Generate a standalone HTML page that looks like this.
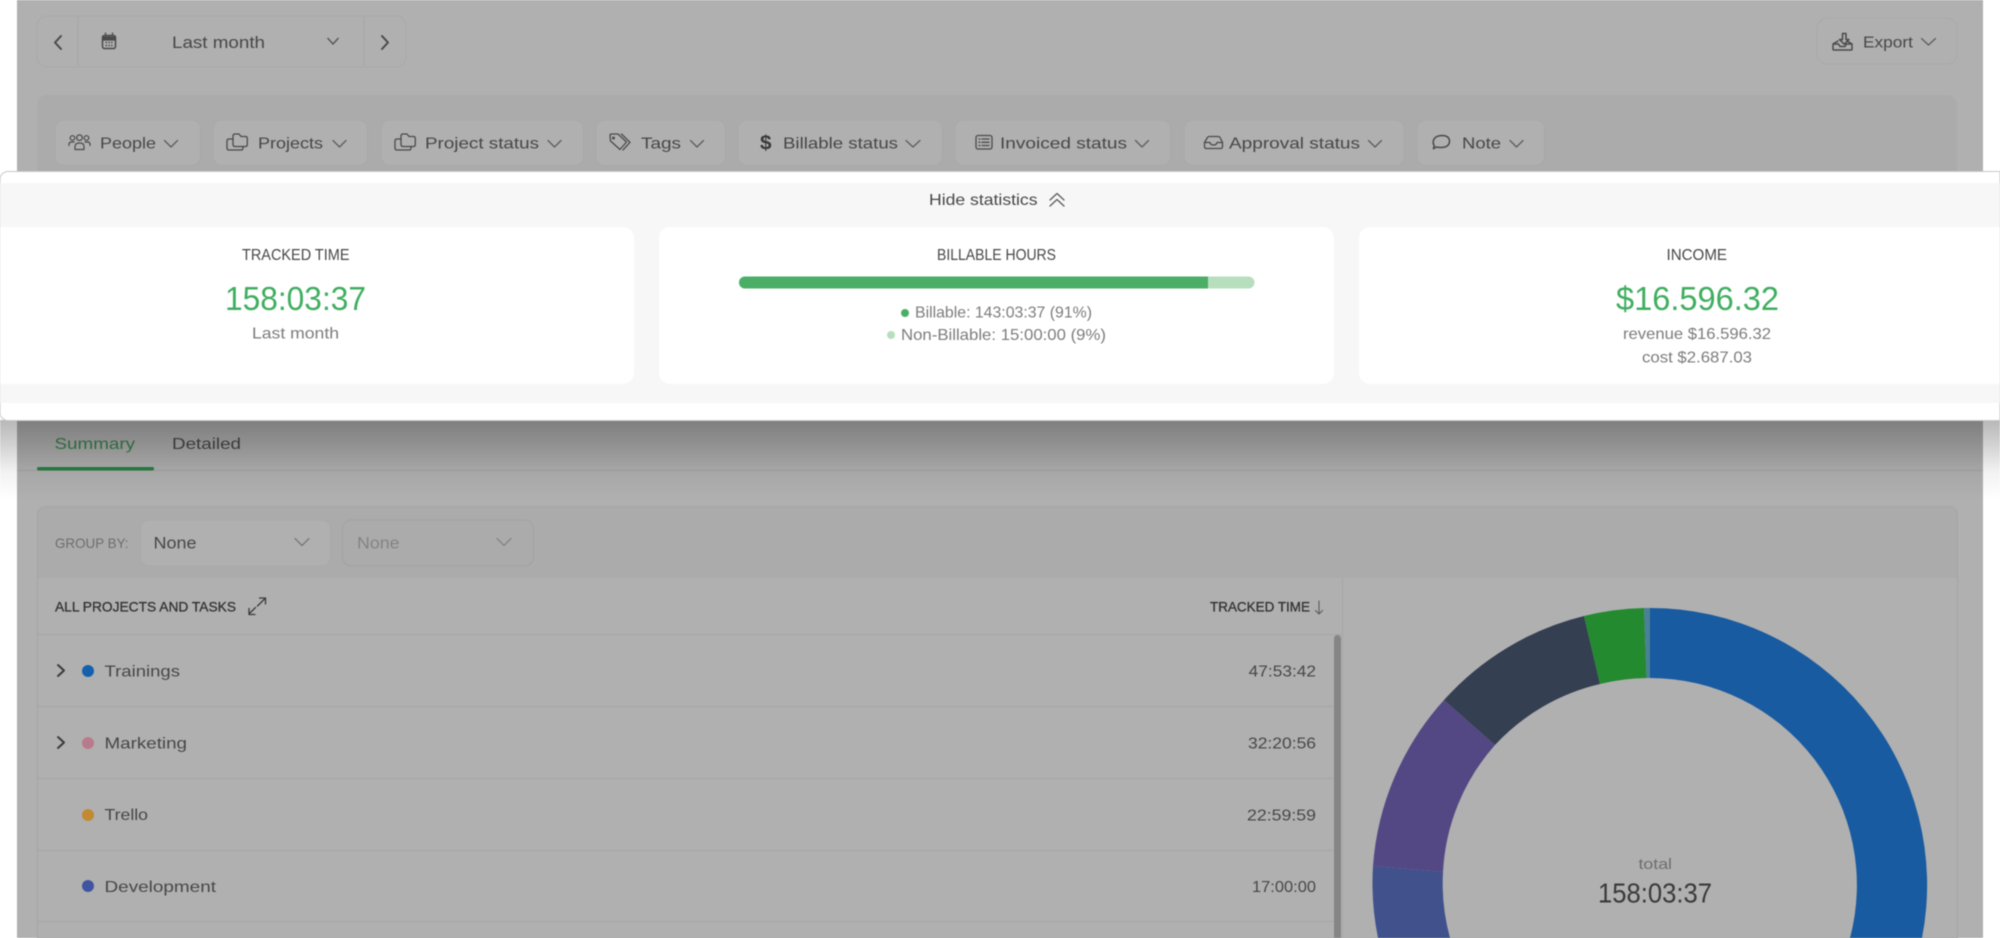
<!DOCTYPE html>
<html lang="en">
<head>
<meta charset="utf-8">
<title>Time report</title>
<style>
html,body{margin:0;padding:0;width:2000px;height:938px;overflow:hidden;background:#fff}
#wrap{position:relative;width:2000px;height:938px;overflow:hidden}
svg{display:block;position:absolute;left:0;top:0;width:2000px;height:938px;overflow:hidden}
#all{filter:blur(.45px)}
text{font-family:"Liberation Sans",sans-serif;fill:#474747;font-size:16px}
.g{fill:#7c7c7c}
.n{fill:#3fae5f}
.ic{fill:none;stroke:#4a4a4a;stroke-width:1.5;stroke-linecap:round;stroke-linejoin:round}
.ch{fill:none;stroke:#5c5c5c;stroke-width:1.25;stroke-linecap:round;stroke-linejoin:round}
.b{fill:#b0b0b0;stroke:#a9a9a9;stroke-width:1}
.s{stroke:#a5a5a5;stroke-width:1;fill:none}
</style>
</head>
<body>
<div id="wrap">
<svg viewBox="0 0 2000 938" xmlns="http://www.w3.org/2000/svg">
<defs>
<linearGradient id="sh" x1="0" y1="0" x2="0" y2="1">
<stop offset="0" stop-color="#000" stop-opacity=".28"/>
<stop offset=".3" stop-color="#000" stop-opacity=".18"/>
<stop offset=".65" stop-color="#000" stop-opacity=".05"/>
<stop offset="1" stop-color="#000" stop-opacity="0"/>
</linearGradient>
<clipPath id="frame"><rect x="0" y="0" width="2000" height="938"/></clipPath>
</defs>
<g clip-path="url(#frame)">
<g id="all">
<rect width="2000" height="938" fill="#fff"/>
<rect x="17" y="0" width="1966" height="938" fill="#b0b0b0"/>

<!-- date control -->
<rect x="37" y="16" width="369" height="51" rx="10" class="b"/>
<path d="M78 17V66M364 17V66" class="s"/>
<path d="M61 36l-6 6.500 6 6.500" class="ic" style="stroke-width:2"/>
<path d="M382 36l6 6.500-6 6.500" class="ic" style="stroke-width:2"/>
<rect x="102.500" y="35.500" width="13" height="13" rx="2" class="ic"/>
<path d="M103 37h12v3h-12zM105.500 32.500v3M112.500 32.500v3" fill="#4a4a4a" stroke="#4a4a4a" stroke-width="1.300"/>
<path d="M105.500 42.500h7M105.500 45.500h7" stroke="#4a4a4a" stroke-width="1.500" stroke-dasharray="1.500 1.300" fill="none"/>
<text x="172" y="48" textLength="93" lengthAdjust="spacingAndGlyphs" style="font-size:17px">Last month</text>
<path d="M328 38.500l5 5.500 5-5.500" class="ch" style="stroke-width:1.600"/>

<!-- export -->
<rect x="1817" y="18" width="140" height="46" rx="10" class="b"/>
<path d="M1838 41l-5 3v5q0 1 1 1h17q1 0 1-1v-5l-5-3M1833 44h5.500l1.500 2.500h5l1.500-2.500h5" class="ic"/>
<path d="M1839.500 39.500h3v-6h3.500v6h3l-4.700 4.700z" class="ic"/>
<text x="1863" y="47.500" textLength="50" lengthAdjust="spacingAndGlyphs">Export</text>
<path d="M1921.500 38.500l7 6.500 7-6.500" class="ch"/>

<!-- filter panel -->
<rect x="37" y="95" width="1920" height="110" rx="10" fill="#ababab"/>
<rect x="55" y="120" width="145.500" height="45.500" rx="9" class="b"/>
<rect x="213" y="120" width="154.500" height="45.500" rx="9" class="b"/>
<rect x="381" y="120" width="202.500" height="45.500" rx="9" class="b"/>
<rect x="596" y="120" width="129.500" height="45.500" rx="9" class="b"/>
<rect x="738" y="120" width="204.500" height="45.500" rx="9" class="b"/>
<rect x="955" y="120" width="215.500" height="45.500" rx="9" class="b"/>
<rect x="1184" y="120" width="220.500" height="45.500" rx="9" class="b"/>
<rect x="1417" y="120" width="127.500" height="45.500" rx="9" class="b"/>

<g class="ic" style="stroke-width:1.200">
<circle cx="72.500" cy="138" r="2.300"/><circle cx="79.500" cy="137.700" r="2.800"/><circle cx="86.500" cy="138" r="2.300"/>
<path d="M75 149.500v-3q0-3.500 4.500-3.500t4.500 3.500v3zM69 145.500q-.5-3 2-3.500h3M90 145.500q.5-3-2-3.500h-3"/>
</g>
<g class="ic" style="stroke-width:1.300">
<path d="M232.500 139h-3.500q-2 0-2 2v7q0 2 2 2h12q2 0 2-2v-1.500"/>
<path d="M233 136q0-2 2-2h4l2 2.500h4.500q1.800 0 1.800 2v6q0 2-2 2H235q-2 0-2-2z"/>
<path d="M400.500 139h-3.500q-2 0-2 2v7q0 2 2 2h12q2 0 2-2v-1.500"/>
<path d="M401 136q0-2 2-2h4l2 2.500h4.500q1.800 0 1.800 2v6q0 2-2 2H403q-2 0-2-2z"/>
<path d="M610 135.500q0-1.500 1.500-1.500h6.500l8.500 8-6.500 7.500-9.500-8.500zM621.500 134l8.500 8.300-7 7.700"/>
<circle cx="613.500" cy="138" r=".8"/>
<rect x="976" y="135.500" width="16" height="13.500" rx="2"/>
<path d="M979 139h1M982 139h7M979 142.300h1M982 142.300h7M979 145.500h1M982 145.500h7"/>
<path d="M1204.500 142.500l3-5q.5-1 1.500-1h9.500q1 0 1.500 1l2.500 5v4q0 2-2 2h-14q-2 0-2-2zM1204.500 142.500h5.500q.5 2.500 3.500 2.500t3.500-2.500h4.500"/>
<path d="M1436 147l-2.500 1.800.7-3.300q-1.200-1.500-1-3.500.5-6 8.500-6.500 7.500 0 7.800 5.500 0 6-7.800 6.500-3 0-5.700-.5z" style="stroke-width:1.500"/>
</g>
<text x="760" y="149.500" textLength="11.500" lengthAdjust="spacingAndGlyphs" style="font-size:20px;font-weight:700;fill:#3a3a3a">$</text>

<text x="100" y="148.500" textLength="56" lengthAdjust="spacingAndGlyphs">People</text>
<text x="258" y="148.500" textLength="65" lengthAdjust="spacingAndGlyphs">Projects</text>
<text x="425" y="148.500" textLength="114" lengthAdjust="spacingAndGlyphs">Project status</text>
<text x="641" y="148.500" textLength="40" lengthAdjust="spacingAndGlyphs">Tags</text>
<text x="783" y="148.500" textLength="115" lengthAdjust="spacingAndGlyphs">Billable status</text>
<text x="1000" y="148.500" textLength="127" lengthAdjust="spacingAndGlyphs">Invoiced status</text>
<text x="1229" y="148.500" textLength="131" lengthAdjust="spacingAndGlyphs">Approval status</text>
<text x="1462" y="148.500" textLength="39" lengthAdjust="spacingAndGlyphs">Note</text>
<path d="M164.500 140.500l6.500 6.500 6.500-6.500M333 140.500l6.500 6.500 6.500-6.500M548 140.500l6.500 6.500 6.500-6.500M690.500 140.500l6.500 6.500 6.500-6.500M906 140.500l7 6.500 7-6.500M1135.500 140.500l6.500 6.500 6.500-6.500M1368.500 140.500l6.500 6.500 6.500-6.500M1510 140.500l6.500 6.500 6.500-6.500" class="ch"/>

<!-- lower report -->
<text x="54.500" y="449" textLength="80.500" lengthAdjust="spacingAndGlyphs" style="fill:#3a7f4c">Summary</text>
<text x="172" y="449" textLength="69" lengthAdjust="spacingAndGlyphs">Detailed</text>
<path d="M17 470.500H1983" stroke="#a2a2a2" stroke-width="1"/>
<rect x="37" y="467" width="117" height="3.500" rx="1.500" fill="#2a7f43"/>

<path d="M37.500 938V516q0-9.500 9.500-9.500H1948q9.500 0 9.500 9.500V938z" fill="#b0b0b0" stroke="#a4a4a4"/>
<path d="M38 578V516q0-9.500 9.500-9.500H1948q9 0 9 9.500V578z" fill="#ababab"/>
<text x="55" y="548" textLength="73.500" lengthAdjust="spacingAndGlyphs" style="font-size:14px;fill:#6e6e6e">GROUP BY:</text>
<rect x="140.500" y="520" width="190" height="46" rx="9" class="b"/>
<rect x="342.500" y="520" width="191" height="46" rx="9" fill="#ababab" stroke="#a2a2a2"/>
<text x="153.500" y="548.500" textLength="43" lengthAdjust="spacingAndGlyphs" style="font-size:17px">None</text>
<text x="357" y="548.500" textLength="42.500" lengthAdjust="spacingAndGlyphs" style="font-size:17px;fill:#848484">None</text>
<path d="M295 538.500l7 7 7-7" class="ch" style="stroke:#6c6c6c;stroke-width:1.100"/>
<path d="M497 538.500l7 7 7-7" class="ch" style="stroke:#7c7c7c;stroke-width:1.100"/>

<text x="55" y="611.700" textLength="181" lengthAdjust="spacingAndGlyphs" style="font-size:14px;fill:#333;stroke:#333;stroke-width:.3">ALL PROJECTS AND TASKS</text>
<path d="M257.500 606l7.500-7.500M259.500 598h6v6M255.500 607.500l-6.500 6.500M249 608.500v6h6" class="ic" style="stroke-width:1.300;stroke:#3a3a3a"/>
<text x="1210" y="611.700" textLength="100" lengthAdjust="spacingAndGlyphs" style="font-size:14px;fill:#333;stroke:#333;stroke-width:.3">TRACKED TIME</text>
<path d="M1319 601v13M1315.500 610.500l3.500 3.500 3.500-3.500" class="ch" style="stroke-width:1.100"/>

<path d="M38 634.500H1342M38 706.500H1334M38 778.500H1334M38 850.500H1334M38 921.500H1334" stroke="#a6a6a6" stroke-width="1.200"/>
<path d="M1342.500 578V938" stroke="#a6a6a6" stroke-width="1"/>
<path d="M1334 938V638.500a3.500 3.500 0 0 1 7 0V938z" fill="#858585"/>

<path d="M58 665l6 5.500-6 5.500" class="ic" style="stroke-width:2;stroke:#3a3a3a"/>
<path d="M58 737l6 5.500-6 5.500" class="ic" style="stroke-width:2;stroke:#3a3a3a"/>
<circle cx="88" cy="671" r="6" fill="#1460ae"/>
<circle cx="88" cy="743" r="6" fill="#b97a8d"/>
<circle cx="88" cy="815" r="6" fill="#c28a33"/>
<circle cx="88" cy="886" r="6" fill="#4055a0"/>
<text x="104.500" y="676.700" textLength="75.500" lengthAdjust="spacingAndGlyphs">Trainings</text>
<text x="104.500" y="748.300" textLength="82.500" lengthAdjust="spacingAndGlyphs">Marketing</text>
<text x="104.500" y="820" textLength="43.500" lengthAdjust="spacingAndGlyphs">Trello</text>
<text x="104.500" y="892" textLength="111.500" lengthAdjust="spacingAndGlyphs">Development</text>
<text x="1248.700" y="676.700" textLength="67.300" lengthAdjust="spacingAndGlyphs">47:53:42</text>
<text x="1248" y="748.700" textLength="68" lengthAdjust="spacingAndGlyphs">32:20:56</text>
<text x="1247" y="820.700" textLength="69" lengthAdjust="spacingAndGlyphs">22:59:59</text>
<text x="1252" y="892" textLength="64" lengthAdjust="spacingAndGlyphs">17:00:00</text>

<!-- donut -->
<path d="M1650 608A277 277 0 0 1 1922 938H1850A207 207 0 0 0 1650 678Z" fill="#185ba0"/>
<path d="M1373 866A277 277 0 0 0 1378 938H1450A207 207 0 0 1 1443 872Z" fill="#40518c"/>
<path d="M1444 700A277 277 0 0 0 1373 866L1443 872A207 207 0 0 1 1495 745Z" fill="#544884"/>
<path d="M1584 616A277 277 0 0 0 1444 700L1495 745A207 207 0 0 1 1600 684Z" fill="#343f52"/>
<path d="M1644 608A277 277 0 0 0 1584 616L1600 684A207 207 0 0 1 1646.500 678Z" fill="#238a30"/>
<path d="M1650 608A277 277 0 0 0 1644 608L1646.500 678H1650Z" fill="#4a8099"/>
<text x="1638.500" y="869" textLength="33.500" lengthAdjust="spacingAndGlyphs" style="font-size:14.500px;fill:#6e6e6e">total</text>
<text x="1598" y="902.500" textLength="114" lengthAdjust="spacingAndGlyphs" style="font-size:28px;fill:#3a3a3a">158:03:37</text>

<!-- shadow under statistics -->
<rect x="0" y="420" width="2000" height="80" fill="url(#sh)"/>

<!-- statistics overlay -->
<path d="M2000 171.500H8a8 8 0 0 0-8 8V412a8 8 0 0 0 8 8.500H2000z" fill="#fff" stroke="#c9c9c9" stroke-width="1"/>
<rect x="0" y="183" width="2000" height="220" fill="#f7f7f7"/>
<path d="M0 227H623a11 11 0 0 1 11 11V373a11 11 0 0 1-11 11H0z" fill="#fff"/>
<rect x="659" y="227" width="675" height="157" rx="11" fill="#fff"/>
<path d="M2000 227H1370a11 11 0 0 0-11 11V373a11 11 0 0 0 11 11H2000z" fill="#fff"/>

<text x="929" y="205" textLength="108.500" lengthAdjust="spacingAndGlyphs">Hide statistics</text>
<path d="M1050 200l7-6.500 7 6.500M1050 206l7-6.500 7 6.500" class="ch" style="stroke-width:1.300"/>

<text x="242" y="259.800" textLength="107.500" lengthAdjust="spacingAndGlyphs">TRACKED TIME</text>
<text x="225" y="310" textLength="141" lengthAdjust="spacingAndGlyphs" class="n" style="font-size:33px">158:03:37</text>
<text x="252" y="338.500" textLength="87" lengthAdjust="spacingAndGlyphs" class="g">Last month</text>

<text x="937" y="259.800" textLength="119" lengthAdjust="spacingAndGlyphs">BILLABLE HOURS</text>
<rect x="739" y="276.500" width="515.500" height="12" rx="6" fill="#b7dfbd"/>
<path d="M745 276.500H1208V288.500H745A6 6 0 0 1 745 276.500Z" fill="#4bae66"/>
<circle cx="905" cy="313" r="4" fill="#4bae66"/>
<circle cx="891" cy="335" r="4" fill="#b7dfbd"/>
<text x="915" y="317.500" textLength="177" lengthAdjust="spacingAndGlyphs" class="g">Billable: 143:03:37 (91%)</text>
<text x="901" y="340" textLength="205" lengthAdjust="spacingAndGlyphs" class="g">Non-Billable: 15:00:00 (9%)</text>

<text x="1666.500" y="259.800" textLength="60.500" lengthAdjust="spacingAndGlyphs">INCOME</text>
<text x="1616" y="310" textLength="163" lengthAdjust="spacingAndGlyphs" class="n" style="font-size:33px">$16.596.32</text>
<text x="1623" y="339" textLength="148" lengthAdjust="spacingAndGlyphs" class="g">revenue $16.596.32</text>
<text x="1642" y="362.500" textLength="110" lengthAdjust="spacingAndGlyphs" class="g">cost $2.687.03</text>
</g>
</g>
</svg>
</div>
</body>
</html>
